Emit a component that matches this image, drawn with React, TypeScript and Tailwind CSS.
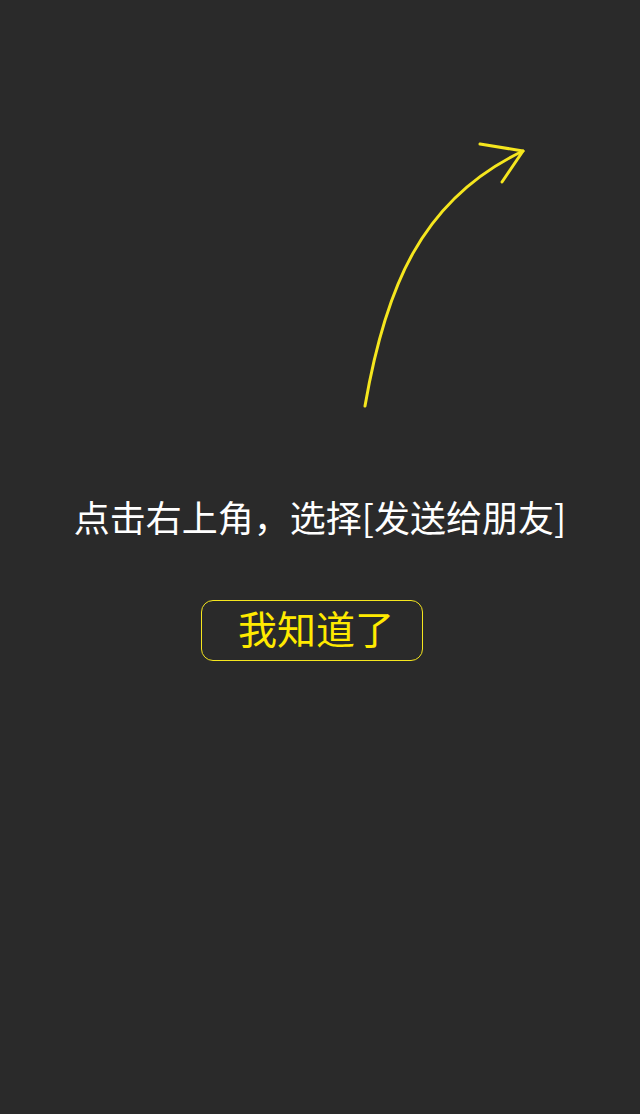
import React from 'react';

function Arrow() {
  return (
    <svg width="640" height="420" viewBox="0 0 640 420" className="block">
      <path
        d="M365 406 C 385 290, 420 200, 523 151"
        fill="none"
        stroke="#f5e61e"
        strokeWidth="3"
        strokeLinecap="round"
      />
      <path
        d="M480 144 L523 151 L502 182"
        fill="none"
        stroke="#f5e61e"
        strokeWidth="3"
        strokeLinecap="round"
        strokeLinejoin="round"
      />
    </svg>
  );
}

export default function App() {
  return (
    <div
      className="w-[640px] h-[1114px] bg-[#2a2a2a] flex flex-col items-center"
      style={{ fontFamily: '"Noto Sans CJK SC", "Liberation Sans", sans-serif' }}
    >
      <Arrow />
      <p className="mt-[74px] text-[36px] leading-[44px] text-white">点击右上角，选择[发送给朋友]</p>
      <button className="mt-[62px] w-[222px] h-[61px] ml-[-16px] rounded-[12px] border-[1.5px] border-[#f5e61e] text-[#ffea00] text-[39px] leading-none flex items-center justify-center pl-[8px] pb-[6px]">
        我知道了
      </button>
    </div>
  );
}
